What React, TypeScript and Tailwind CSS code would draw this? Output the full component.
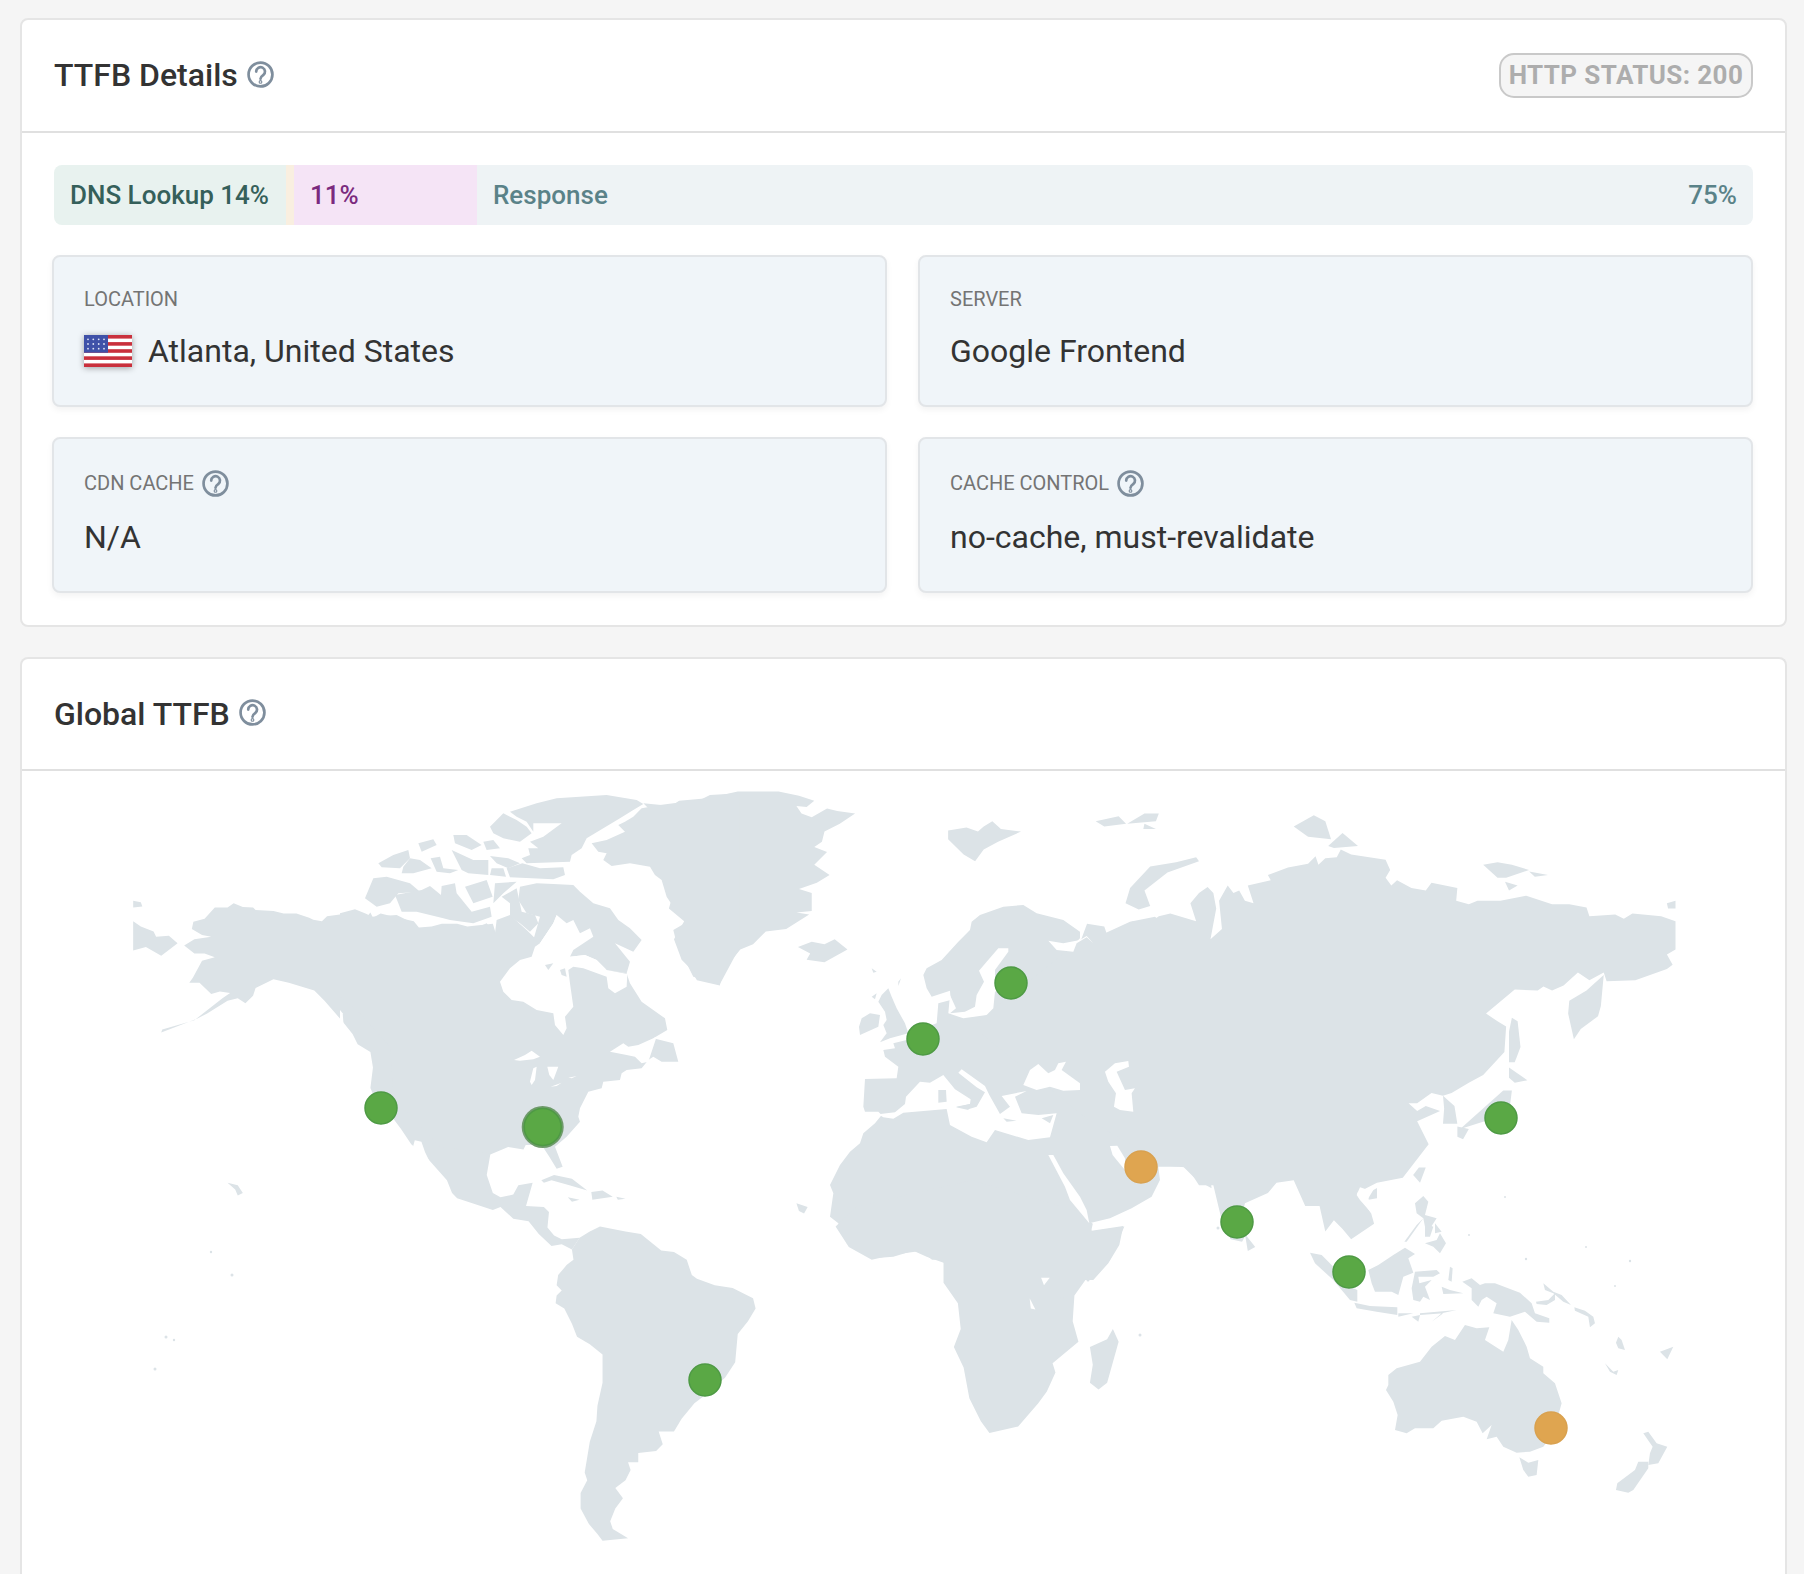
// traced from the reference, each group uses its own crop's coordinates
const GROUP_A = "translate(100 770) scale(0.5102 0.5128)"
const GROUP_B = "translate(340 780) scale(0.3333)"
const GROUP_C = "translate(830 880) scale(0.3333)"
const GROUP_D = "translate(800 770) scale(0.5741 0.5128)"
const GROUP_E = "translate(1260 1100) scale(0.3333)"

const landA = [
  "183,296 205,290 225,268 250,268 262,260 280,267 300,268 305,273 340,275 360,280 385,280 410,288 418,292 435,295 445,285 470,282 490,276 505,276 520,290 530,278 535,288 550,280 580,287 615,295 625,307 650,305 670,300 700,300 720,305 770,300 800,400 850,700 830,740 800,735 765,750 758,790 770,825 785,833 810,828 820,810 848,805 835,850 870,852 880,862 877,892 890,908 905,915 940,912 925,935 905,925 885,928 860,905 840,880 810,875 785,852 770,858 700,835 690,825 680,800 640,755 610,730 590,700 575,680 545,655 530,620 535,580 530,550 505,535 495,515 475,490 440,450 420,430 370,415 340,408 305,425 300,440 285,455 270,445 250,450 210,475 190,485 120,512 122,506 185,488 240,445 255,435 235,432 218,437 195,415 175,415 182,405 200,372 225,365 205,358 185,358 165,342 185,330 218,325 200,322 180,310",
  "65,255 80,258 83,266 65,268",
  "65,295 80,305 105,315 110,325 135,323 152,338 140,347 120,362 90,345 65,352",
  "865,800 890,790 925,797 955,820 920,810 885,800 870,805",
  "963,823 985,820 1005,832 965,838",
  "917,833 940,838 925,842",
  "1012,832 1030,836 1015,838",
  "250,805 270,810 280,825 270,830 265,818",
  "1365,845 1387,852 1380,865 1370,860",
  "1368,345 1395,335 1420,340 1440,330 1465,350 1420,375 1385,370 1392,358",
  "925,935 928,955 915,965 898,985 895,1005 905,1015 895,1025 893,1040 910,1050 925,1080 935,1105 960,1120 985,1140 985,1195 975,1240 973,1270 960,1310 955,1340 950,1370 955,1385 942,1410 942,1440 958,1470 975,1490 985,1503 1035,1498 1005,1480 1000,1465 1010,1440 1025,1420 1010,1400 1030,1385 1040,1365 1035,1350 1055,1350 1055,1332 1090,1328 1103,1315 1095,1290 1125,1290 1140,1265 1165,1235 1185,1220 1225,1185 1245,1155 1250,1100 1270,1075 1285,1050 1280,1030 1240,1010 1205,1005 1170,992 1160,985 1150,955 1125,940 1100,937 1060,905 1030,900 980,890 960,900 940,912",
  "1065,65 1120,70 1135,60 1190,55 1250,42 1330,42 1370,50 1400,60 1385,72 1365,70 1375,85 1395,92 1425,75 1445,80 1480,85 1450,105 1420,120 1415,140 1400,150 1425,160 1400,185 1430,205 1405,220 1370,232 1395,240 1395,275 1365,278 1390,282 1345,310 1305,315 1280,340 1255,350 1235,375 1220,390 1215,420 1170,410 1155,385 1140,370 1125,330 1145,295 1115,270 1150,150",
]

const landB = [
  "905,85 960,75 1035,65 1080,60 1110,45 1200,40 1200,500 1140,612 1060,590 1010,490 1000,450 1035,430 1030,405 1000,380 980,350 965,300 945,285 930,260 870,250 815,258 790,240 800,220 775,215 755,190 800,180 855,155 835,135 855,125 880,110",
  "0,400 45,388 80,402 95,410 170,405 220,430 235,450 300,442 340,435 395,450 440,430 465,460 470,420 510,405 560,450 570,460 600,490 650,540 860,580 870,610 905,665 975,715 982,750 940,775 1000,790 1015,845 965,845 940,830 925,840 905,865 860,870 845,880 840,900 790,905 785,925 745,935 720,985 715,1010 720,1025 680,1070 645,1100 668,1160 650,1166 628,1130 605,1095 530,1095 495,1100 450,1120 300,1100 160,950 150,800 60,700 0,650",
  "510,95 590,70 650,55 800,45 890,60 910,72 880,90 840,115 790,145 740,175 725,205 695,225 690,245 560,250 545,235 570,225 565,205 595,205 570,185 610,170 665,130 580,130 580,155 560,125 530,110",
  "450,140 490,100 530,120 560,140 575,160 540,185 490,175 460,160",
  "547,250 600,265 670,262 675,285 640,298 510,292 500,265",
  "455,265 490,265 498,290 450,285",
  "540,320 590,310 640,312 700,315 720,335 760,370 810,385 835,420 870,445 905,480 880,515 825,490 870,545 860,580 800,570 770,540 735,525 690,530 700,510 760,470 750,445 720,460 700,420 680,430 650,405 640,430 600,490 580,480 600,410 560,400 535,360",
  "115,250 160,225 205,210 210,235 180,265 125,262",
  "235,190 280,178 290,195 245,215",
  "190,260 210,235 240,240 275,265 220,280 185,280",
  "272,235 300,230 310,265 355,270 330,280 290,275",
  "335,210 400,240 445,240 445,285 385,280 365,270",
  "340,165 380,165 425,195 395,210 345,190",
  "430,185 460,180 480,205 440,210",
  "450,228 505,235 540,250 505,265 470,250",
  "75,355 100,295 140,290 210,310 240,335 175,340 150,370 110,380",
  "165,345 245,330 270,318 303,345 305,318 345,310 350,340 395,395 450,380 455,410 400,430 330,420 310,415 230,395 185,395 175,370",
  "375,320 440,300 458,350 400,370",
  "465,310 530,305 490,340 460,370",
  "485,350 530,325 545,395 585,405 595,430 570,455 540,430 510,410 510,370",
]

const landC = [
  "280,285 290,265 335,240 385,185 420,150 425,125 450,105 520,80 580,75 620,100 700,120 750,155 750,175 735,190 770,175 785,185 825,160 900,125 975,110 1000,130 1100,170 1100,600 1145,925 1100,900 1060,860 985,860 990,900 965,950 905,985 840,1015 778,1030 785,1052 880,1038 868,1095 835,1150 790,1200 345,1200 345,1150 290,1130 250,1112 190,1130 130,1135 50,1090 25,1030 0,1010 10,940 0,915 30,855 60,815 90,790 100,760 135,730 155,705 145,695 105,695 100,680 105,597 200,595 205,560 165,530 160,510 195,505 190,490 230,480 265,450 320,430 325,370 362,360 360,332 305,350 290,325",
  "145,365 155,345 175,325 185,350 200,385 225,430 235,460 180,475 150,487 170,460 160,435 170,420 165,395",
  "95,415 120,400 150,405 145,440 90,465 87,440",
  "125,265 140,275 130,278",
  "205,305 213,295 205,318",
  "125,350 140,340 135,358",
]

const landD = [
  "62,890 85,930 125,955 165,945 210,938 230,955 250,955 250,1000 275,1040 280,1090 268,1125 285,1165 295,1225 315,1270 330,1293 380,1280 415,1235 430,1212 445,1175 440,1157 485,1115 475,1075 478,1025 500,990 540,955 565,890 507,900 510,885 480,860 300,800 100,850",
  "490,330 500,300 530,305 535,322 570,300 580,295 600,305 625,285 645,280 690,295 680,260 695,240 710,228 720,240 725,270 715,330 735,310 730,255 745,225 755,240 765,235 775,255 790,260 780,225 820,215 815,205 850,190 885,183 898,168 903,185 915,172 935,170 942,155 960,165 1020,175 1028,195 1020,210 1030,225 1040,215 1065,230 1090,235 1100,220 1145,230 1143,255 1165,262 1180,255 1220,255 1265,245 1310,262 1340,262 1370,268 1375,285 1420,282 1435,290 1450,280 1500,285 1525,295 1525,350 1510,360 1520,380 1510,388 1455,410 1405,412 1400,395 1375,410 1355,395 1330,420 1310,430 1295,422 1285,430 1245,428 1195,475 1215,490 1230,500 1227,550 1190,595 1165,610 1135,630 1120,635 1100,630 1075,650 1060,650 1075,665 1090,655 1115,665 1075,685 1095,730 1050,795 1005,805 970,825 995,865 1000,885 960,915 945,895 930,878 915,900 905,850 880,850 860,800 830,805 815,825 775,845 770,870 790,880 770,920 750,915 735,880 720,810 695,810 675,775 620,770 590,740 500,680 300,500",
  "1340,450 1370,430 1400,400 1395,460 1390,480 1360,505 1348,525 1338,475",
  "545,1090 555,1115 535,1195 520,1208 505,1195 510,1160 505,1125 535,1110",
  "775,905 793,930 780,938",
  "567,260 575,230 610,188 655,180 690,170 695,178 640,200 600,235 610,265 590,272",
  "258,118 290,112 310,120 320,110 335,100 350,115 385,120 345,140 320,155 305,178 285,165 258,135",
  "515,100 555,90 568,105 530,110",
  "570,105 600,85 625,85 620,100",
  "600,105 620,115 598,115",
  "860,110 895,88 915,100 925,135 885,130",
  "920,148 945,123 972,148 930,152",
  "1190,185 1215,180 1240,185 1270,195 1230,210 1215,210",
  "1228,218 1250,225 1235,235",
  "1270,198 1303,205 1280,208",
  "1510,260 1525,255 1525,270 1512,270",
  "1240,483 1250,490 1255,540 1245,570 1235,570 1235,510",
  "1235,580 1267,605 1245,610 1235,600",
  "1225,625 1240,625 1235,670 1150,700 1165,685",
  "1145,695 1165,700 1155,720 1145,715",
  "1120,635 1140,655 1145,690 1120,690 1122,660",
  "1078,775 1090,775 1080,805 1068,790",
  "990,825 1005,815 1005,835 990,838",
]

const landE = [
  "150,458 185,465 220,500 270,560 292,570 292,605 270,600 220,540 165,490",
  "283,608 330,618 412,622 412,645 350,635 290,625",
  "325,510 355,495 400,465 435,443 465,462 445,475 460,518 430,530 415,585 395,575 345,575 335,550",
  "465,515 530,510 540,520 520,530 475,530 478,550 515,540 495,560 510,600 490,590 480,605 460,600 455,565",
  "570,500 578,505 575,545 565,540",
  "607,545 635,535 660,555 675,550 705,550 780,578 815,610 825,640 868,655 868,668 830,665 795,635 750,650 700,640 710,610 680,590 665,600 655,620 635,600 635,565",
  "415,640 460,640 415,650",
  "455,650 480,645 475,665",
  "480,640 590,630 545,640 515,665 550,640 480,645",
  "545,560 570,570 610,580 550,582",
  "465,310 490,288 505,305 495,345 530,355 515,378 495,380 490,355 470,340",
  "433,425 470,375 490,355 440,425",
  "495,370 520,380 510,410 495,410",
  "525,370 545,395 525,400",
  "495,430 530,420 540,400 558,430 540,460 520,440",
  "828,605 865,600 885,580 885,600 860,615 830,612",
  "850,550 880,575 905,585 933,615 910,605 880,580 855,570",
  "943,622 975,632 1000,650 1005,670 990,682 985,650 945,632",
  "1075,710 1085,720 1095,750 1075,745 1068,728",
  "1035,790 1060,815 1075,810 1070,825 1050,815",
  "1200,755 1240,740 1222,778",
  "385,825 410,805 480,785 515,740 555,708 585,720 615,675 650,685 688,682 675,720 730,755 745,720 755,660 775,690 800,740 810,775 850,800 850,820 885,850 905,910 880,1000 850,1040 810,1055 770,1058 730,1040 710,1010 680,1018 695,975 668,1000 650,965 610,950 545,962 520,985 465,985 440,1000 405,990 413,945 400,905 378,870 385,855",
  "778,1072 805,1088 835,1080 830,1125 805,1130 790,1110",
  "1150,1000 1165,995 1190,1030 1222,1040 1195,1090 1165,1095 1170,1060 1178,1040",
  "1135,1085 1165,1085 1165,1105 1120,1170 1105,1178 1068,1170 1072,1150 1125,1110",
]

const waterA = ["617,722 630,725 637,745 660,792 635,775 612,740"]

const waterB = [
  "480,605 490,635 515,660 550,665 590,690 640,700 645,735 670,765 680,745 675,710 700,680 690,610 685,570 700,560 730,565 800,590 805,625 825,640 860,620 862,582 800,570 770,540 735,525 690,530 650,405 640,430 600,490 640,515 680,545 640,520 600,490 585,500 575,530 540,540 510,565",
  "522,840 555,825 575,812 600,830 580,838 540,842",
  "570,905 580,865 590,860 585,900 575,915",
  "622,860 655,860 640,900 628,885",
  "632,920 665,908 650,918",
  "685,893 710,888 695,895",
  "810,815 850,790 865,800 895,795 950,770 930,830 925,845 905,850 885,830 860,825",
  "0,690 8,700 12,750 0,745",
]

const waterC = [
  "535,205 505,205 470,245 447,272 462,305 440,345 435,380 405,395 360,400 378,385 360,345 355,400 400,415 470,405 490,385 495,335 540,320 495,310 495,270 535,215",
  "655,182 680,210 730,215 740,190 770,172 790,190 770,168 750,180 700,190",
  "145,703 195,697 225,672 228,650 270,605 300,608 340,585 375,628 422,658 420,672 378,680 415,688 440,680 465,637 440,622 385,578 395,568 465,618 478,645 510,702 540,680 515,648 590,633 555,650 575,700 625,705 680,700 660,772 595,780 495,750 470,787 425,770 360,735 350,687 220,698 190,716 160,712",
  "580,615 600,570 625,552 655,580 675,570 685,550 708,545 695,570 750,610 750,630 700,632 660,620 620,630",
  "825,575 855,550 895,543 897,560 860,575 885,630 915,625 905,640 910,695 870,690 852,680 858,640 835,605",
  "655,825 670,825 700,880 750,950 770,990 778,1030 745,990 720,960 705,920",
  "840,798 862,797 885,835 885,870 860,840 848,825",
]

const waterD = ["420,990 435,990 425,1005", "400,1030 410,1052 402,1050"]

const waterE = ["290,285 300,262 325,270 340,270 325,295 335,340 300,300"]

const islandsB = ["615,555 640,550 625,570", "660,570 675,565 680,590 665,585"]
const islandsC = [
  "325,630 348,630 350,665 325,668",
  "520,715 560,722 530,725",
  "378,682 420,672 415,690",
  "635,715 670,705 660,730",
]

const dots = [
  [211, 1252, 1.2], [232, 1275, 1.5], [166, 1337, 1.5], [174, 1340, 1.2], [155, 1369, 1.5],
  [1062, 1297, 1.5], [1140, 1335, 1.5], [1088, 1280, 1.5], [1218, 1228, 1.5],
  [1526, 1259, 1.2], [1586, 1247, 1], [1630, 1261, 1.2], [1615, 1286, 1], [1505, 1197, 1], [1469, 1235, 1],
]

const greens = [
  [381, 1108], [1011, 983], [923, 1039], [1501, 1118], [1349, 1272], [1237, 1222], [705, 1380],
]
const oranges = [
  [1141, 1167], [1551, 1428],
]

function Polys({ points, fill, transform }: { points: string[]; fill: string; transform: string }) {
  return (
    <g transform={transform} className={fill}>
      {points.map((p, i) => (
        <polygon key={i} points={p} />
      ))}
    </g>
  )
}

function WorldMap() {
  return (
    <svg viewBox="22 771 1763 803" className="block h-[803px] w-[1763px]">
      <Polys points={landA} fill="fill-[#dce3e7]" transform={GROUP_A} />
      <Polys points={landB} fill="fill-[#dce3e7]" transform={GROUP_B} />
      <Polys points={landC} fill="fill-[#dce3e7]" transform={GROUP_C} />
      <Polys points={landD} fill="fill-[#dce3e7]" transform={GROUP_D} />
      <Polys points={waterA} fill="fill-white" transform={GROUP_A} />
      <Polys points={waterB} fill="fill-white" transform={GROUP_B} />
      <Polys points={waterC} fill="fill-white" transform={GROUP_C} />
      <Polys points={waterD} fill="fill-white" transform={GROUP_D} />
      <Polys points={waterE} fill="fill-white" transform={GROUP_E} />
      <Polys points={landE} fill="fill-[#dce3e7]" transform={GROUP_E} />
      <Polys points={islandsB} fill="fill-[#dce3e7]" transform={GROUP_B} />
      <Polys points={islandsC} fill="fill-[#dce3e7]" transform={GROUP_C} />
      {dots.map(([x, y, r], i) => (
        <circle key={i} cx={x} cy={y} r={r} className="fill-[#dce3e7]" />
      ))}
      {greens.map(([x, y], i) => (
        <circle key={i} cx={x} cy={y} r={16} className="fill-[#5aa845] stroke-[#4e9a44] stroke-[1.5]" />
      ))}
      {oranges.map(([x, y], i) => (
        <circle key={i} cx={x} cy={y} r={16} className="fill-[#dfa550] stroke-[#d9a14f] stroke-[1.5]" />
      ))}
      <circle cx={542.7} cy={1127} r={21} className="fill-[#6e9a6a]" />
      <circle cx={542.7} cy={1127} r={18.5} className="fill-[#5aa845] stroke-[#4e9a44] stroke-[1.5]" />
    </svg>
  )
}

function UsFlag() {
  return (
    <svg viewBox="0 0 48 32" className="h-8 w-12 shrink-0 drop-shadow-[0_1px_3px_rgba(0,0,0,0.35)]">
      <rect width="48" height="32" fill="#fff" />
      {[0, 7.1, 14.2, 21.3, 28.4].map((y) => (
        <rect key={y} y={y} width="48" height="3.6" fill="#c9303c" />
      ))}
      <rect width="24" height="17.7" fill="#3f51a8" />
      {[4.3, 9, 13.7].map((y) =>
        [4, 9.3, 14.7, 20].map((x) => <circle key={`${x}-${y}`} cx={x} cy={y} r="0.9" fill="#dfe4f5" />)
      )}
    </svg>
  )
}

function HelpIcon({ className }: { className: string }) {
  return (
    <svg viewBox="0 0 24 24" fill="none" className={`${className} shrink-0 stroke-[#7f8e9d]`} strokeWidth={2.4}>
      <circle cx="12" cy="12" r="10.6" />
      <path d="M8.2 9.4a3.9 3.9 0 1 1 6.2 3.1c-1.4 1-2.4 1.7-2.4 3.2" strokeLinecap="round" />
      <circle cx="12" cy="18.6" r="0.5" />
    </svg>
  )
}

function InfoBox({ label, help, children }: { label: string; help?: boolean; children: React.ReactNode }) {
  return (
    <div className="rounded-lg border-2 border-[#e2e5e8] bg-[#f0f5f9] px-[30px] pt-[28px] shadow-[0_3px_6px_rgba(0,0,0,0.05)]">
      {help ? (
        <div className="mb-[16px] flex h-[32px] items-center gap-2 text-[20px] text-[#747474]">
          {label}
          <HelpIcon className="size-[27px]" />
        </div>
      ) : (
        <div className="mb-[17px] mt-px flex h-[26px] items-center text-[20px] text-[#747474]">{label}</div>
      )}
      <div className="flex items-center gap-4 text-[32px] leading-[44px] text-[#333]">{children}</div>
    </div>
  )
}

export default function App() {
  return (
    <div className="h-[1574px] overflow-hidden bg-[#f5f5f5] pl-[20px] pr-[17px] pt-[18px] font-[Roboto,sans-serif]">
      <section className="h-[609px] rounded-lg border-2 border-[#e5e5e5] bg-white">
        <header className="flex h-[113px] items-center justify-between border-b-2 border-[#e0e0e0] px-[32px]">
          <h2 className="flex items-center gap-[9px] pb-[2px] text-[32px] font-medium text-[#333]">
            TTFB Details
            <HelpIcon className="size-[27px]" />
          </h2>
          <span className="flex h-[45px] w-[254px] items-center justify-center rounded-[15px] border-2 border-[#c9c9c9] bg-[#f5f5f5] text-[26px] font-bold tracking-[0.4px] text-[#adadad]">
            HTTP STATUS: 200
          </span>
        </header>
        <div className="px-[32px] pt-[32px]">
          <div className="flex h-[60px] items-center overflow-hidden rounded-lg text-[26px] font-medium">
            <div className="flex h-full w-[232px] items-center bg-[#e8f2ef] pl-4 text-[#35605a]">DNS Lookup 14%</div>
            <div className="h-full w-2 bg-[#f9efe0]" />
            <div className="flex h-full w-[183px] items-center bg-[#f5e4f6] pl-4 text-[#7b2a7e]">11%</div>
            <div className="flex h-full flex-1 items-center justify-between bg-[#eef3f5] px-4 text-[#5a8288]">
              <span>Response</span>
              <span>75%</span>
            </div>
          </div>
          <div className="-ml-[2px] mt-[30px] grid grid-cols-2 grid-rows-[152px_156px] gap-x-[31px] gap-y-[30px]">
            <InfoBox label="LOCATION">
              <UsFlag />
              Atlanta, United States
            </InfoBox>
            <InfoBox label="SERVER">Google Frontend</InfoBox>
            <InfoBox label="CDN CACHE" help>
              N/A
            </InfoBox>
            <InfoBox label="CACHE CONTROL" help>
              no-cache, must-revalidate
            </InfoBox>
          </div>
        </div>
      </section>
      <section className="mt-[30px] rounded-t-lg border-2 border-b-0 border-[#e5e5e5] bg-white">
        <header className="flex h-[112px] items-center border-b-2 border-[#e0e0e0] px-[32px]">
          <h2 className="flex items-center gap-[9px] text-[32px] font-medium text-[#333]">
            Global TTFB
            <HelpIcon className="-mt-1 size-[27px]" />
          </h2>
        </header>
        <WorldMap />
      </section>
    </div>
  )
}
